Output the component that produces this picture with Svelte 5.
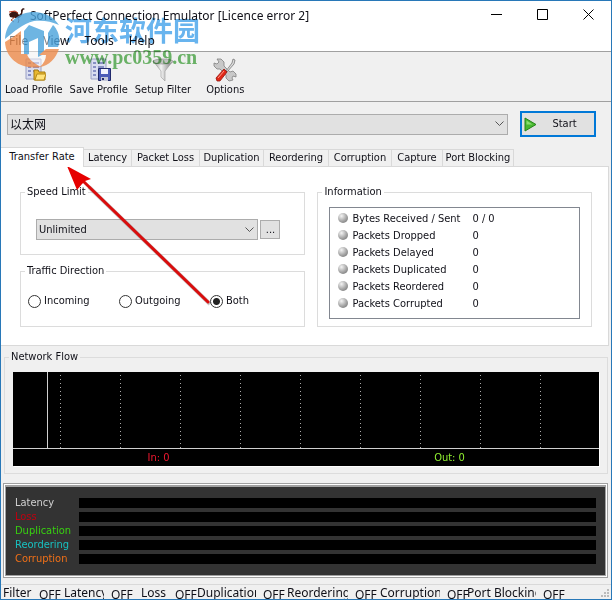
<script>
  const tabs = [
    { label: "Transfer Rate", width: 83 },
    { label: "Latency", width: 48 },
    { label: "Packet Loss", width: 68 },
    { label: "Duplication", width: 64 },
    { label: "Reordering", width: 65 },
    { label: "Corruption", width: 63 },
    { label: "Capture", width: 51 },
    { label: "Port Blocking", width: 71 },
  ];

  const info = [
    ["Bytes Received / Sent", "0 / 0"],
    ["Packets Dropped", "0"],
    ["Packets Delayed", "0"],
    ["Packets Duplicated", "0"],
    ["Packets Reordered", "0"],
    ["Packets Corrupted", "0"],
  ];

  const meters = [
    { label: "Latency", color: "#d0d0d0" },
    { label: "Loss", color: "#c00010" },
    { label: "Duplication", color: "#38d010" },
    { label: "Reordering", color: "#18c0c0" },
    { label: "Corruption", color: "#f07018" },
  ];

  // names are cut off at their own width, like a narrow status panel
  const status = [
    { label: "Filter", name: 29, width: 61 },
    { label: "Latency", name: 40, width: 77 },
    { label: "Loss", name: 27, width: 56 },
    { label: "Duplication", name: 59, width: 90 },
    { label: "Reordering", name: 61, width: 93 },
    { label: "Corruption", name: 60, width: 87 },
    { label: "Port Blocking", name: 69, width: 101 },
  ];

  let activeTab = $state("Transfer Rate");
  let direction = $state("Both");
</script>

<div class="window">
  <header class="titlebar">
    <svg class="app-icon" viewBox="0 0 17 16" aria-hidden="true">
      <path d="M1 6l4-3 4 1 2 3 2-2V2l2-2 2 1-2 1-1 5-3 3H6L2 9z" fill="#3a1712" />
      <path d="M1 4l6-1 3 2" fill="none" stroke="#c33a20" />
      <path d="M7 9l-4 3 3 2M9 9l2 3-1 3" fill="none" stroke="#b04a30" />
    </svg>
    <h1>SoftPerfect Connection Emulator [Licence error 2]</h1>
    <div class="controls">
      <button aria-label="Minimize"><svg viewBox="0 0 11 11"><path d="M0 5.5h11" /></svg></button>
      <button aria-label="Maximize"><svg viewBox="0 0 11 11"><path d="M.5.5h10v10H.5z" /></svg></button>
      <button aria-label="Close"><svg viewBox="0 0 11 11"><path d="M.5.5l10 10M10.5.5l-10 10" /></svg></button>
    </div>
  </header>

  <nav class="menu">
    <button>File</button>
    <button>View</button>
    <button>Tools</button>
    <button>Help</button>
  </nav>

  <div class="toolbar">
    <button>
      <svg viewBox="0 0 24 24" aria-hidden="true">
        <path d="M4 1h15v20H4z" fill="#d9ddf0" stroke="#9aa0c4" />
        <path d="M6 5h3M11 5h6M6 9h3M11 9h6M6 13h3M11 13h6M6 17h3" stroke="#8890c4" stroke-width="2" />
        <path d="M12 12h4l1 2h6v8H12z" fill="#e8b830" stroke="#a57a10" />
        <path d="M13 22l2-6h9l-2 6z" fill="#ffe27a" stroke="#b98c18" />
      </svg>
      Load Profile
    </button>
    <button>
      <svg viewBox="0 0 24 24" aria-hidden="true">
        <path d="M4 1h15v20H4z" fill="#d9ddf0" stroke="#9aa0c4" />
        <path d="M6 5h3M11 5h6M6 9h3M11 9h6M6 13h3M6 17h3" stroke="#8890c4" stroke-width="2" />
        <path d="M11.5 10.5h12v12h-12z" fill="#4c5cb8" stroke="#20296c" />
        <path d="M14 11h7v5h-7z" fill="#f2f4ff" />
        <path d="M14 19h7v4h-7z" fill="#c4c8d8" />
        <path d="M15 20h2v2h-2z" fill="#20296c" />
      </svg>
      Save Profile
    </button>
    <button>
      <svg viewBox="0 0 24 24" aria-hidden="true">
        <defs>
          <linearGradient id="steel">
            <stop offset="0" stop-color="#8a8a8a" />
            <stop offset=".4" stop-color="#f4f4f4" />
            <stop offset="1" stop-color="#777" />
          </linearGradient>
        </defs>
        <path d="M2 3l8 10v6l4 4V13l8-10z" fill="url(#steel)" stroke="#999" stroke-width=".6" />
        <ellipse cx="12" cy="3.5" rx="10" ry="2.5" fill="#c4c4c4" stroke="#888" stroke-width=".6" />
      </svg>
      Setup Filter
    </button>
    <button>
      <svg viewBox="0 0 24 24" aria-hidden="true">
        <path
          d="M4 1l4 0 3 3v4l6 6 3-1 3 3v3l-3-1-1 2 1 2-4 1-3-3 0-3-6-6-3 0-3-3V5l3 1 2-2z"
          fill="#c8c8c8" stroke="#808080" stroke-width=".8" />
        <path d="M20 1l2 1-1 4-7 8-1-1 6-8z" fill="#ddd" stroke="#777" stroke-width=".8" />
        <path d="M11 11l3 3-7 9H4l-1-3z" fill="#e02818" stroke="#94140c" stroke-width=".8" />
        <path d="M5 20l6-7" stroke="#ff9a88" />
      </svg>
      Options
    </button>
  </div>

  <div class="adapter">
    <div class="select adapter-select">
      <select aria-label="Network adapter"><option>以太网</option></select>
      <svg viewBox="0 0 9 6" aria-hidden="true"><path d="M.5.5l4 4 4-4" /></svg>
    </div>
    <button class="start">
      <svg viewBox="0 0 13 15" aria-hidden="true">
        <path d="M1 1v13l11-6.5z" fill="#48b830" stroke="#258218" />
        <path d="M2.5 3.5v4h6z" fill="#8cde70" />
      </svg>
      <span>Start</span>
    </button>
  </div>

  <div class="tabs" role="tablist">
    {#each tabs as tab}
      <button
        role="tab"
        class:active={activeTab === tab.label}
        aria-selected={activeTab === tab.label}
        style="width: {tab.width}px"
        onclick={() => (activeTab = tab.label)}>{tab.label}</button
      >
    {/each}
  </div>

  <main class="panel">
    <div class="left">
      <fieldset>
        <legend>Speed Limit</legend>
        <div class="speed">
          <div class="select speed-select">
            <select aria-label="Speed limit"><option>Unlimited</option></select>
            <svg viewBox="0 0 9 6" aria-hidden="true"><path d="M.5.5l4 4 4-4" /></svg>
          </div>
          <button class="more">...</button>
        </div>
      </fieldset>
      <fieldset>
        <legend>Traffic Direction</legend>
        <div class="direction">
          {#each ["Incoming", "Outgoing", "Both"] as option}
            <label><input type="radio" name="direction" value={option} bind:group={direction} />{option}</label>
          {/each}
        </div>
      </fieldset>
    </div>
    <fieldset class="information">
      <legend>Information</legend>
      <div class="info-box">
        <table>
          <tbody>
            {#each info as [name, value]}
              <tr>
                <th scope="row"><span class="led"></span>{name}</th>
                <td>{value}</td>
              </tr>
            {/each}
          </tbody>
        </table>
      </div>
    </fieldset>
  </main>

  <fieldset class="flow">
    <legend>Network Flow</legend>
    <div class="chart">
      <svg class="grid" aria-hidden="true">
        {#each Array(9) as _, i}
          <line x1={i * 60 + 47.5} x2={i * 60 + 47.5} y1="3" y2="76" stroke="#aaa" stroke-dasharray="1 3" />
        {/each}
        <line x1="34.5" x2="34.5" y1="0" y2="76" stroke="#d0d0d0" />
      </svg>
      <div class="totals">
        <span class="in">In: 0</span>
        <span class="out">Out: 0</span>
      </div>
    </div>
  </fieldset>

  <section class="meter-frame">
    <div class="meters">
      {#each meters as meter}
        <span style="color: {meter.color}">{meter.label}</span>
        <div class="bar"></div>
      {/each}
    </div>
  </section>

  <footer class="status">
    {#each status as item}
      <div class="cell" style="width: {item.width}px">
        <span class="name" style="width: {item.name}px">{item.label}</span>
        <span class="off">OFF</span>
      </div>
    {/each}
    <svg class="grip" viewBox="0 0 9 9" aria-hidden="true">
      <path d="M6 0h2v2H6zM3 3h2v2H3zM6 3h2v2H6zM0 6h2v2H0zM3 6h2v2H3zM6 6h2v2H6z" fill="#bbb" />
    </svg>
  </footer>

  <svg class="arrow" viewBox="0 0 150 140" aria-hidden="true">
    <path d="M143 138L22 21" stroke="#444" stroke-opacity=".3" stroke-width="4" />
    <path d="M141 136L16 15" stroke="#d90d0d" stroke-width="3" stroke-linecap="round" />
    <path d="M0 0l10 24 5-6 3-3 6-2z" fill="#e60000" />
  </svg>

  <div class="watermark">
    <svg viewBox="0 0 56 56" aria-hidden="true">
      <circle cx="28" cy="28" r="27" fill="#fff" opacity=".6" />
      <path d="M0 27C1 10 14 0 29 0c10 0 20 5 25 13-8-4-17-5-25-4C17 12 10 19 0 27z" fill="#4ba3dc" />
      <path d="M24 13l15 6v23l-6 3V26l-9 4v12l-5 2V19z" fill="#4ba3dc" />
      <path d="M43 21l5-8c6 6 8 15 5 22H43z" fill="#4ba3dc" />
      <path d="M0 30l8-5 8-6v23h6c1 5 7 9 14 13C17 58 1 48 0 30z" fill="#ee8c4c" />
      <path d="M41 37h13c-3 9-10 17-19 18 4-4 6-8 6-12h-7z" fill="#ee8c4c" />
    </svg>
    <div>
      <strong>河东软件园</strong>
      <span>www.pc0359.cn</span>
    </div>
  </div>
</div>

<style>
  :global(body) {
    margin: 0;
    background: #f0f0f0;
  }

  .window {
    position: relative;
    box-sizing: border-box;
    min-height: 100vh;
    display: flex;
    flex-direction: column;
    overflow: hidden;
    border: 1px solid #2878b8;
    background: #f0f0f0;
    color: #101018;
    font: 11px/14px "DejaVu Sans Condensed", "DejaVu Sans", "Noto Sans CJK SC", sans-serif;
  }

  button,
  select {
    box-sizing: border-box;
    margin: 0;
    padding: 0;
    border: 0;
    background: none;
    color: inherit;
    font: inherit;
  }

  .titlebar {
    display: flex;
    align-items: center;
    height: 30px;
    background: #fff;
  }

  .app-icon {
    width: 17px;
    height: 16px;
    margin: 0 5px 0 7px;
  }

  h1 {
    flex: 1;
    margin: 0;
    font: 12px/20px "Noto Sans", sans-serif;
    white-space: nowrap;
  }

  .controls {
    display: flex;
  }

  .controls button {
    width: 46px;
    height: 29px;
  }

  .controls svg {
    width: 11px;
    height: 11px;
    fill: none;
    stroke: #000;
  }

  .menu {
    display: flex;
    gap: 15px;
    height: 20px;
    padding-left: 8px;
    background: #fff;
    border-bottom: 1px solid #a0a0a0;
  }

  .menu button {
    height: 20px;
    font: 12px/20px "Noto Sans", sans-serif;
  }

  .toolbar {
    display: flex;
    gap: 7px;
    height: 49px;
    padding-left: 4px;
    border-bottom: 1px solid #a0a0a0;
  }

  .toolbar button {
    display: flex;
    flex-direction: column;
    align-items: center;
    padding-top: 6px;
  }

  .toolbar svg {
    width: 24px;
    height: 24px;
    margin-bottom: 1px;
  }

  .toolbar button:last-child {
    margin-left: 8px;
  }

  .adapter {
    display: flex;
    gap: 12px;
    align-items: center;
    padding: 9px 15px 10px 6px;
  }

  .select {
    display: grid;
    align-items: center;
  }

  .select select {
    grid-area: 1 / 1;
    width: 100%;
    height: 21px;
    padding-left: 2px;
    appearance: none;
    border: 1px solid #acacac;
    border-radius: 0;
    background: #e1e1e1;
  }

  .select svg {
    grid-area: 1 / 1;
    justify-self: end;
    width: 9px;
    height: 6px;
    margin-right: 4px;
    fill: none;
    stroke: #555;
    pointer-events: none;
  }

  .adapter-select {
    flex: 1;
  }

  .adapter-select select {
    font: 12px/16px "Noto Sans CJK SC", sans-serif;
  }

  .start {
    display: flex;
    align-items: center;
    width: 76px;
    height: 26px;
    padding: 0 2px;
    border: 2px solid #0078d7;
    background: #e1e1e1;
  }

  .start svg {
    width: 13px;
    height: 15px;
  }

  .start span {
    flex: 1;
  }

  .tabs {
    display: flex;
    align-items: flex-end;
    height: 19px;
  }

  .tabs button {
    height: 17px;
    border: 1px solid #d9d9d9;
    border-width: 1px 1px 0 0;
    white-space: nowrap;
  }

  .tabs button.active {
    z-index: 1;
    height: 20px;
    margin-bottom: -1px;
    padding-bottom: 2px;
    background: #fff;
  }

  .panel {
    display: flex;
    gap: 12px;
    margin-right: 2px;
    padding: 18px 16px 18px 19px;
    border: 1px solid #d9d9d9;
    border-left: 0;
    background: #fff;
  }

  fieldset {
    box-sizing: border-box;
    min-width: 0;
    margin: 0;
    padding: 0;
    border: 1px solid #dcdcdc;
  }

  legend {
    margin-left: 4px;
    padding: 0 2px;
  }

  .left {
    flex: 1;
    display: flex;
    flex-direction: column;
    gap: 9px;
  }

  .speed {
    display: flex;
    align-items: center;
    gap: 2px;
    padding: 20px 24px 14px 15px;
  }

  .speed-select {
    flex: 1;
  }

  .more {
    width: 20px;
    height: 19px;
    border: 1px solid #acacac;
    background: #e1e1e1;
  }

  .direction {
    display: flex;
    padding: 15px 7px 17px;
  }

  .direction label {
    display: flex;
    align-items: center;
    gap: 3px;
    width: 91px;
    height: 16px;
  }

  .direction label:last-child {
    width: auto;
  }

  input {
    appearance: none;
    box-sizing: border-box;
    width: 13px;
    height: 13px;
    margin: 0;
    border: 1px solid #333;
    border-radius: 50%;
    background: #fff;
  }

  input:checked {
    background: radial-gradient(circle, #222 3px, #fff 4px);
  }

  .information {
    width: 48%;
  }

  .info-box {
    margin: 8px 11px 7px;
    padding: 2px 8px 6px;
    border: 1px solid #828790;
  }

  table {
    border-collapse: collapse;
  }

  th,
  td {
    height: 17px;
    padding: 0;
    font-weight: normal;
    text-align: left;
    white-space: nowrap;
  }

  th {
    width: 134px;
  }

  .led {
    display: inline-block;
    width: 10px;
    height: 10px;
    margin-right: 4px;
    border-radius: 50%;
    background: radial-gradient(circle at 35% 30%, #f4f4f4, #aaa 50%, #666);
    vertical-align: -1px;
  }

  .flow {
    margin: 4px 3px 0;
  }

  .chart {
    margin: 8px 8px 7px;
    background: #000;
    box-shadow: 1px 1px #fff;
  }

  .grid {
    display: block;
    width: 100%;
    height: 76px;
    border-bottom: 1px solid #d0d0d0;
  }

  .totals {
    display: grid;
    grid-template-columns: 1fr 1fr;
    height: 17px;
    padding-right: 4px;
    line-height: 18px;
    text-align: center;
  }

  .in {
    color: #f01830;
  }

  .out {
    color: #90f030;
  }

  .meter-frame {
    margin: 9px 3px 6px 2px;
    padding: 1px;
    border: 1px solid #a0a0a0;
    background: #fff;
  }

  .meters {
    display: grid;
    grid-template-columns: 64px 1fr;
    align-items: center;
    padding: 9px;
    border: 1px solid #a0a0a0;
    border-top-width: 2px;
    background: #333;
  }

  .bar {
    height: 10px;
    background: #000;
  }

  .status {
    display: flex;
    height: 14px;
    padding-left: 2px;
    overflow: hidden;
    border-top: 1px solid #d9d9d9;
    font: 12px/16px "Noto Sans", sans-serif;
  }

  .cell {
    display: flex;
    gap: 7px;
    white-space: nowrap;
  }

  .name {
    flex: none;
    overflow: hidden;
  }

  .off {
    padding-top: 2px;
  }

  .grip {
    width: 9px;
    height: 9px;
    margin: auto 1px 1px auto;
  }

  .arrow {
    position: absolute;
    left: 66px;
    top: 165px;
    width: 150px;
    height: 140px;
    pointer-events: none;
    fill: none;
  }

  .watermark {
    position: absolute;
    left: 4px;
    top: 11px;
    display: flex;
    gap: 4px;
    pointer-events: none;
  }

  .watermark svg {
    width: 56px;
    height: 56px;
    opacity: 0.8;
  }

  /* multiply keeps the title and menu readable through the lettering */
  .watermark div {
    display: flex;
    flex-direction: column;
    mix-blend-mode: multiply;
  }

  .watermark strong {
    color: #68b4ee;
    font: bold 27px/35px "Noto Sans CJK SC", sans-serif;
  }

  .watermark span {
    color: #70bc6c;
    font: bold 20px/20px "Liberation Serif", serif;
  }
</style>
